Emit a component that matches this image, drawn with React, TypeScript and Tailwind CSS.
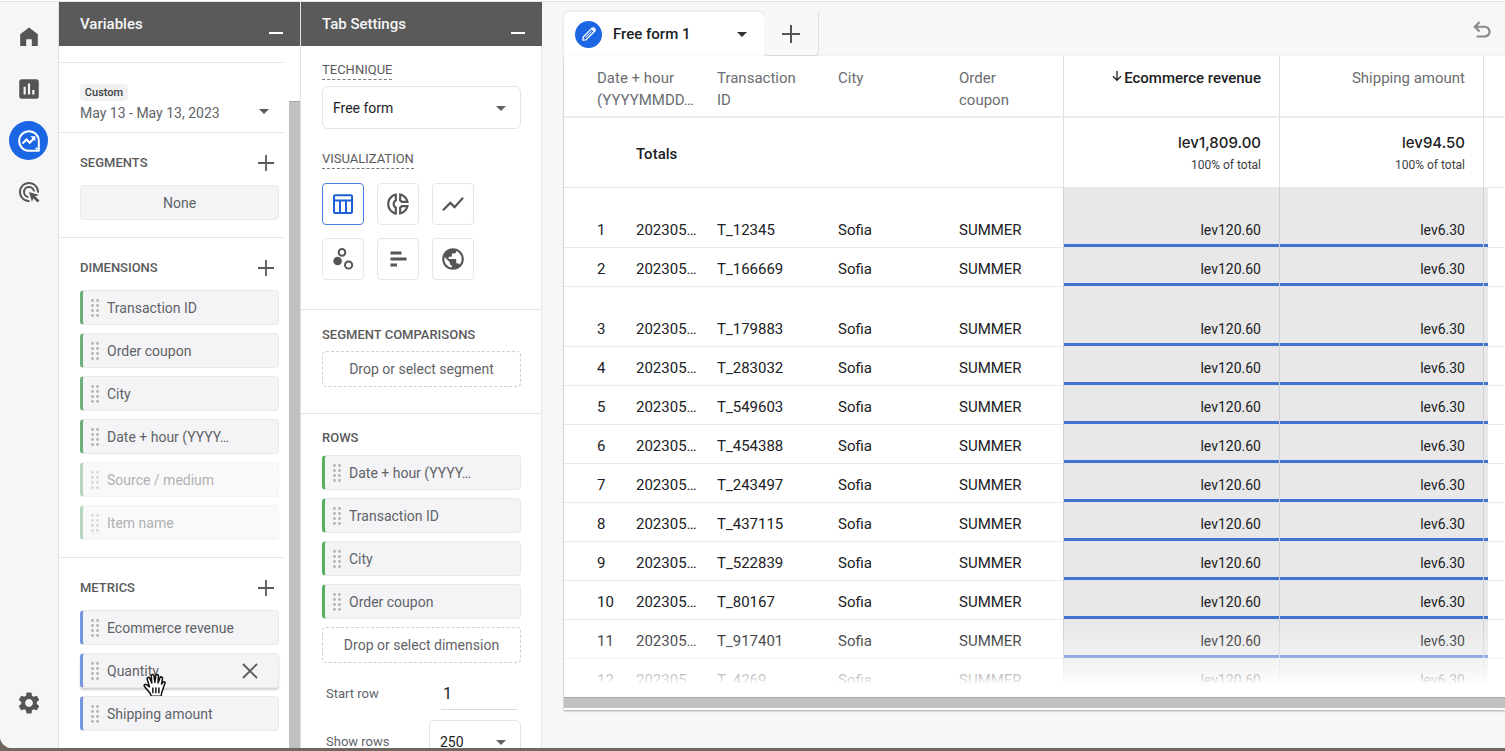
import React from "react";
import { MdAdsClick, MdArrowDropDown, MdInsertChart, MdOutlineDonutSmall, MdPublic, MdSettings, MdShowChart } from "react-icons/md";

const dimensions = ["Transaction ID", "Order coupon", "City", "Date + hour (YYYY…", "Source / medium", "Item name"];
const unusedDimensions = ["Source / medium", "Item name"];
const metrics = ["Ecommerce revenue", "Quantity", "Shipping amount"];
const rowDimensions = ["Date + hour (YYYY…", "Transaction ID", "City", "Order coupon"];
const transactions = [
  "T_12345", "T_166669", "T_179883", "T_283032", "T_549603", "T_454388",
  "T_243497", "T_437115", "T_522839", "T_80167", "T_917401", "T_4269",
];
const tallRows = [0, 2];

function HomeIcon() {
  return (
    <svg viewBox="0 0 24 24" className="size-6" fill="currentColor">
      <path d="M3.2 21V9.2L12 2.5l8.8 6.7V21h-6v-6.8H9.2V21z" />
    </svg>
  );
}

function ExploreIcon() {
  return (
    <svg viewBox="0 0 24 24" className="size-6" fill="none" stroke="currentColor">
      <path d="M21.8 21.8H12A9.8 9.8 0 1 1 21.8 12z" strokeWidth="2" strokeLinejoin="round" />
      <path d="M5.5 14.6l4-4 3.2 3.2 4.8-5" strokeWidth="2.1" />
      <path d="M13.4 7.2h5v5z" fill="currentColor" stroke="none" />
      <circle cx="19.6" cy="19.6" r="1.2" fill="currentColor" stroke="none" />
    </svg>
  );
}

function PlusIcon({ className }: { className: string }) {
  return (
    <svg viewBox="0 0 16 16" className={className} fill="none" stroke="currentColor" strokeWidth="1.8">
      <path d="M8 0v16M0 8h16" />
    </svg>
  );
}

function TableIcon() {
  return (
    <svg viewBox="0 0 24 24" className="size-6" fill="none" stroke="currentColor" strokeWidth="2">
      <rect x="3" y="3.2" width="18" height="17.8" rx="1" />
      <path d="M3 8.6h18M9 8.6V21M15 8.6V21" />
    </svg>
  );
}

function ScatterIcon() {
  return (
    <svg viewBox="0 0 24 24" className="size-6" fill="none" stroke="currentColor" strokeWidth="2">
      <circle cx="6.6" cy="14" r="4.3" fill="currentColor" stroke="none" />
      <circle cx="11" cy="5.4" r="3.3" />
      <circle cx="17.6" cy="18" r="3.6" />
    </svg>
  );
}

function BarsIcon() {
  return (
    <svg viewBox="0 0 24 24" className="size-6" fill="currentColor">
      <path d="M4.500 4.500h11v3h-11zM4.500 10.600h16v3h-16zM4.500 16.600H11v3H4.500z" />
    </svg>
  );
}

function PencilIcon() {
  return (
    <svg viewBox="0 0 16 16" className="size-4" fill="none" stroke="currentColor" strokeWidth="1.3" strokeLinejoin="round" strokeLinecap="round">
      <path d="M1.900 14.100l.3-3.100 8.600-8.600a1.950 1.950 0 0 1 2.800 2.800L5 13.800z" />
      <path d="M4.800 11.200l5.400-5.400" strokeWidth="1" />
      <path d="M11 2.600l2.400 2.400" strokeWidth="2" />
    </svg>
  );
}

function UndoIcon() {
  return (
    <svg viewBox="0 0 24 24" className="size-[26px]" fill="currentColor">
      <path d="M7 19v-2h7.1q1.575 0 2.738-1T18 13.5 16.838 11 14.1 10H7.8l2.6 2.6L9 14 4 9l5-5 1.4 1.4L7.8 8h6.3q2.425 0 4.163 1.575T20 13.5t-1.737 3.925T14.1 19z" />
    </svg>
  );
}

function HandCursor() {
  return (
    <svg viewBox="0 0 24 26" className="pointer-events-none absolute left-[60px] top-[18px] h-[26px] w-6" fill="#fff" stroke="#111" strokeWidth="1.5" strokeLinejoin="round" strokeLinecap="round">
      <path d="M8.2 24.2c-.6-2.600-1.500-4-3.200-5.600-1.300-1.300-2.700-3-3.600-4.300-.8-1.300.8-2.500 2.100-1.700l3 2.300L4.200 7.200c-.5-1.800 1.800-2.500 2.500-.9L8.800 11 8.300 4.100c-.1-1.900 2.400-2.100 2.700-.3l.9 6.500.9-6.700c.3-1.800 2.700-1.500 2.600.3l-.3 7.200 1.900-5.300c.6-1.600 2.800-.9 2.500.8l-1 5.500 1.400-1.800c1.100-1.300 2.700-.2 2 1.200-1 2.200-1.500 3.900-2.100 6-.5 1.900-1.500 3-1.600 6.700z" />
      <path d="M9.900 16v4.800M12.900 16v4.800M15.900 16v4.800" />
    </svg>
  );
}

function DragDots() {
  return (
    <svg viewBox="0 0 8 18" className="h-[18px] w-2 text-[#b2b2b4]" fill="currentColor">
      {[1.5, 6.500, 11.5, 16.500].map((y) => (
        <g key={y}>
          <circle cx="1.5" cy={y} r="1.4" />
          <circle cx="6.5" cy={y} r="1.4" />
        </g>
      ))}
    </svg>
  );
}

const chipBase = "relative flex h-[35px] items-center gap-2 rounded-sm border border-l-[3px] border-[#e8e9ec] bg-[#f4f4f6] pl-2 text-sm text-[#5f6368]";

function Chip({ label, tone, faded, active }: { label: string; tone: string; faded?: boolean; active?: boolean }) {
  return (
    <li className={chipBase + " " + tone + (faded ? " opacity-50" : "") + (active ? " shadow-[0_2px_2px_rgba(0,0,0,0.18)]" : "")}>
      <DragDots />
      <span className="flex-1">{label}</span>
      {active && (
        <button aria-label={"Remove " + label} className="mr-5 text-[#5a5a5a]">
          <svg viewBox="0 0 16 16" className="size-4" fill="none" stroke="currentColor" strokeWidth="1.8">
            <path d="M1 1l14 14M15 1L1 15" />
          </svg>
        </button>
      )}
      {active && <HandCursor />}
    </li>
  );
}

function PanelHeader({ title }: { title: string }) {
  return (
    <header className="flex h-11 shrink-0 items-center bg-[#5a5a5a] pl-[21px] pr-[17px] text-white">
      <h2 className="flex-1 text-[15px] font-medium text-[#f5f5f5]">{title}</h2>
      <button aria-label={"Minimize " + title} className="flex h-5 w-[14px] items-end">
        <span className="h-0.5 w-full bg-white" />
      </button>
    </header>
  );
}

function VariablesSection({ title, children }: { title: string; children: React.ReactNode }) {
  return (
    <section className="border-b border-[#e3e4e7] pb-[17px] pl-[21px] pr-[5px] pt-5">
      <div className="mb-3 flex h-5 items-center justify-between pr-[5px]">
        <h3 className="text-[13px] font-medium text-[#5a5a5c]">{title}</h3>
        <button aria-label={"Add " + title.toLowerCase()} className="text-[#5a5a5a]">
          <PlusIcon className="size-4" />
        </button>
      </div>
      {children}
    </section>
  );
}

function VariablesPanel() {
  return (
    <section className="flex w-[242px] shrink-0 flex-col border-r border-[#dfe0e3] bg-white">
      <PanelHeader title="Variables" />
      <div className="flex min-h-0 flex-1">
        <div className="w-[225px] overflow-hidden">
          <div className="h-[17px] border-b border-[#e3e4e7]" />
          <button className="flex h-[70px] w-full items-center border-b border-[#e3e4e7] pl-[21px] pr-3 pt-3.5 text-left">
            <span className="flex-1">
              <span className="flex w-12 justify-center rounded-sm bg-[#f1f1f3] text-[11px] font-medium leading-[17px] text-[#3c4043]">Custom</span>
              <span className="block text-sm leading-6 text-[#5f6368]">May 13 - May 13, 2023</span>
            </span>
            <MdArrowDropDown className="mt-3 size-4 scale-150 text-[#5a5a5a]" />
          </button>
          <VariablesSection title="SEGMENTS">
            <button className="h-[35px] w-full rounded-sm border border-[#e9eaed] bg-[#f4f4f6] text-sm text-[#5f6368]">None</button>
          </VariablesSection>
          <VariablesSection title="DIMENSIONS">
            <ul className="flex flex-col gap-2">
              {dimensions.map((d) => (
                <Chip key={d} label={d} tone="border-l-[#6dae7c]" faded={unusedDimensions.includes(d)} />
              ))}
            </ul>
          </VariablesSection>
          <VariablesSection title="METRICS">
            <ul className="flex flex-col gap-2">
              {metrics.map((m) => (
                <Chip key={m} label={m} tone="border-l-[#7397dc]" active={m === "Quantity"} />
              ))}
            </ul>
          </VariablesSection>
        </div>
        <div className="ml-auto flex w-[11px] pt-[55px]">
          <div className="flex-1 border-t border-[#a8a8aa] bg-[#c1c1c3]" />
        </div>
      </div>
    </section>
  );
}

const vizButton = "flex size-[42px] items-center justify-center rounded border";

function VizButton({ label, selected, children }: { label: string; selected?: boolean; children: React.ReactNode }) {
  return (
    <button aria-label={label} className={vizButton + (selected ? " border-[#4a82e4] text-[#1c5fd6]" : " border-[#e6e6ea] text-[#555555]")}>
      {children}
    </button>
  );
}

const panelLabel = "text-[13px] leading-5 text-[#5a5a5c]";
const dashedLabel = "block w-fit border-b border-dashed border-[#77777a] text-[13px] leading-[19px] text-[#5a5a5c]";
const dropZone = "h-9 w-full rounded border border-dashed border-[#d0d0d4] text-sm text-[#5f6368]";

function TabSettingsPanel() {
  return (
    <section className="flex w-[241px] shrink-0 flex-col overflow-hidden bg-white">
      <PanelHeader title="Tab Settings" />
      <div className="flex min-h-0 flex-1 flex-col overflow-hidden border-r border-[#e6e7ea]">
        <div className="border-b border-[#e3e4e7] pb-[29px] pl-[21px] pr-5 pt-[14px]">
          <label htmlFor="technique" className={dashedLabel}>TECHNIQUE</label>
          <div className="relative mt-1.5">
            <select id="technique" className="h-[43px] w-full appearance-none rounded-md border border-[#e2e3e8] bg-white px-2.5 text-sm text-[#202124]">
              <option>Free form</option>
            </select>
            <MdArrowDropDown className="pointer-events-none absolute right-2 top-2.5 size-6 text-[#5f6368]" />
          </div>
          <h3 className={dashedLabel + " mt-5"}>VISUALIZATION</h3>
          <div className="mt-[14px] grid w-fit grid-cols-3 gap-[13px]">
            <VizButton label="Table" selected><TableIcon /></VizButton>
            <VizButton label="Donut chart"><MdOutlineDonutSmall className="size-[26px]" /></VizButton>
            <VizButton label="Line chart"><MdShowChart className="size-[26px]" /></VizButton>
            <VizButton label="Scatter plot"><ScatterIcon /></VizButton>
            <VizButton label="Bar chart"><BarsIcon /></VizButton>
            <VizButton label="Geo map"><MdPublic className="size-[26px]" /></VizButton>
          </div>
        </div>
        <div className="border-b border-[#e3e4e7] pb-[26px] pl-[21px] pr-5 pt-[15px]">
          <h3 className={panelLabel + " mb-1.5 font-medium"}>SEGMENT COMPARISONS</h3>
          <button className={dropZone}>Drop or select segment</button>
        </div>
        <div className="pl-[21px] pr-5 pt-[14px]">
          <h3 className={panelLabel + " mb-[7px] font-medium"}>ROWS</h3>
          <ul className="flex flex-col gap-2">
            {rowDimensions.map((d) => (
              <Chip key={d} label={d} tone="border-l-[#57b05f]" />
            ))}
          </ul>
          <button className={dropZone + " mt-2"}>Drop or select dimension</button>
          <div className="mt-[15px] flex h-8 items-center justify-between pl-1 pr-1">
            <label htmlFor="start-row" className="text-[13px] text-[#5f6368]">Start row</label>
            <input id="start-row" defaultValue="1" className="h-8 w-[76px] border-b border-[#dcdde0] pl-0.5 text-base text-[#202124] outline-none" />
          </div>
          <div className="mt-2.5 flex h-11 items-center justify-between pl-1">
            <label htmlFor="show-rows" className="text-[13px] text-[#5f6368]">Show rows</label>
            <div className="relative">
              <select id="show-rows" className="h-11 w-[92px] appearance-none rounded-md border border-[#e2e3e8] bg-white px-2.5 text-sm text-[#202124]">
                <option>250</option>
              </select>
              <MdArrowDropDown className="pointer-events-none absolute right-2 top-2.5 size-6 text-[#5f6368]" />
            </div>
          </div>
        </div>
      </div>
    </section>
  );
}

const headCell = "border-b-2 border-[#ececef] pt-[11px] text-left align-top font-normal text-[#6a6d71]";
const totalCell = "border-b border-[#e3e4e7] align-top";
const metricCell = "border-b border-l border-b-[#e3e4e7] border-l-[#cfd0d3] bg-[#e8e8e9] pb-[7px] text-right align-bottom text-sm leading-5 shadow-[inset_0_-3px_0_#4173cf]";
const bodyCell = "border-b border-[#e9eaed] pb-[7px] align-bottom";

function ReportTable() {
  return (
    <table className="w-full table-fixed border-separate border-spacing-0 text-[15px] text-[#202124]">
      <colgroup>
        <col className="w-[72px]" />
        <col className="w-[81px]" />
        <col className="w-[121px]" />
        <col className="w-[121px]" />
        <col className="w-[104px]" />
        <col className="w-[216px]" />
        <col className="w-[204px]" />
        <col className="w-[5px]" />
        <col />
      </colgroup>
      <thead>
        <tr className="h-[62px] leading-[22px]">
          <th colSpan={2} className={headCell + " pl-[33px]"}>Date + hour<br />(YYYYMMDD…</th>
          <th className={headCell}>Transaction<br />ID</th>
          <th className={headCell}>City</th>
          <th className={headCell}>Order<br />coupon</th>
          <th className={headCell + " border-l border-l-[#dcdde0] pr-[18px]"}>
            <span className="flex items-center justify-end font-medium text-[#202124]">
              <svg viewBox="0 0 10 12" className="mb-1 mr-0.5 h-3 w-2.5" fill="none" stroke="currentColor" strokeWidth="1.3">
                <path d="M5 1v9M1 6.300l4 4 4-4" />
              </svg>
              Ecommerce revenue
            </span>
          </th>
          <th className={headCell + " border-l border-l-[#dcdde0] pr-[18px]"}>
            <span className="block text-right">Shipping amount</span>
          </th>
          <th colSpan={2} className={headCell + " border-l border-l-[#dcdde0]"} aria-label="More" />
        </tr>
      </thead>
      <tbody className="leading-5">
        <tr className="h-[70px]">
          <td className={totalCell} />
          <td colSpan={4} className={totalCell + " pt-[26px] font-medium"}>Totals</td>
          {["lev1,809.00", "lev94.50"].map((v) => (
            <td key={v} className={totalCell + " border-l border-l-[#dcdde0] pr-[18px] pt-[14px] text-right"}>
              <span className="block font-['Inter'] text-[15px] font-medium leading-[22px]">{v}</span>
              <span className="block text-xs leading-[22px] text-[#3c4043]">100% of total</span>
            </td>
          ))}
          <td colSpan={2} className={totalCell + " border-l border-l-[#dcdde0]"} />
        </tr>
        {transactions.map((id, i) => (
          <tr key={id} className={tallRows.includes(i) ? "h-[60px]" : "h-[39px]"}>
            <td className={bodyCell + " pl-[33px]"}>{i + 1}</td>
            <td className={bodyCell}>202305…</td>
            <td className={bodyCell}>{id}</td>
            <td className={bodyCell}>Sofia</td>
            <td className={bodyCell}>SUMMER</td>
            <td className={metricCell + " pr-[18px]"}>lev120.60</td>
            <td className={metricCell + " pr-[18px]"}>lev6.30</td>
            <td className={metricCell} />
            <td className={bodyCell} />
          </tr>
        ))}
      </tbody>
    </table>
  );
}

function Canvas() {
  return (
    <main className="flex min-w-0 flex-1 flex-col bg-[#f6f7f9] pb-[38px] pl-[22px] pt-2.5">
      <div className="flex h-11 shrink-0 items-stretch">
        <div className="flex w-[200px] items-center rounded-t-md bg-white pl-[11px] pr-2.5 shadow-[0_0_3px_rgba(0,0,0,0.15)]">
          <span className="flex size-[27px] items-center justify-center rounded-full bg-[#1a66e4] text-white">
            <PencilIcon />
          </span>
          <h1 className="flex-1 pl-[11px] text-[15px] font-medium text-[#202124]">Free form 1</h1>
          <button aria-label="Tab options"><MdArrowDropDown className="size-6 text-[#303134]" /></button>
        </div>
        <button aria-label="Add tab" className="flex w-[55px] items-center justify-center rounded-b-sm border-b border-r border-[#dedfe2] bg-[#f8f8f9] text-[#555555]">
          <PlusIcon className="size-[18px]" />
        </button>
        <button aria-label="Undo" className="ml-auto mr-2.5 pb-2 text-[#8a8a8c]"><UndoIcon /></button>
      </div>
      <div className="relative z-10 flex min-h-0 flex-1 flex-col bg-white shadow-[0_1px_2px_rgba(0,0,0,0.35)]">
        <div className="relative min-h-0 flex-1 overflow-hidden">
          <ReportTable />
          <div className="pointer-events-none absolute inset-x-0 bottom-0 h-20 bg-[linear-gradient(to_bottom,transparent,rgba(255,255,255,0.15)_25%,rgba(255,255,255,0.4)_48%,rgba(255,255,255,0.75)_75%,white_84%)]" />
        </div>
        <div className="mb-0.5 h-[11px] shrink-0 border-t border-[#a8a8aa] bg-[#c1c1c3]" />
      </div>
    </main>
  );
}

export default function App() {
  return (
    <div className="flex h-screen flex-col overflow-hidden bg-[#70685e] pb-[3px] font-['Roboto',sans-serif]">
      <div className="flex min-h-0 flex-1 flex-col overflow-hidden rounded-bl-xl bg-white">
        <div className="h-0.5 shrink-0 border-b border-[#e2e3e5] bg-white" />
        <div className="flex min-h-0 flex-1">
          <nav aria-label="Main" className="flex w-[59px] shrink-0 flex-col items-center border-r border-[#dfe0e4] bg-[#f5f6f8] pb-8 pr-px pt-[23px] text-[#555555]">
            <a href="#home" aria-label="Home"><HomeIcon /></a>
            <a href="#reports" aria-label="Reports" className="mt-[27px]"><MdInsertChart className="size-[26px]" /></a>
            <a href="#explore" aria-label="Explore" className="mt-[19px] flex size-[39px] items-center justify-center rounded-full bg-[#1a66e4] text-white"><ExploreIcon /></a>
            <a href="#advertising" aria-label="Advertising" className="mt-5"><MdAdsClick className="size-6" /></a>
            <a href="#admin" aria-label="Admin" className="mt-auto"><MdSettings className="size-[26px]" /></a>
          </nav>
          <VariablesPanel />
          <TabSettingsPanel />
          <Canvas />
        </div>
      </div>
    </div>
  );
}
